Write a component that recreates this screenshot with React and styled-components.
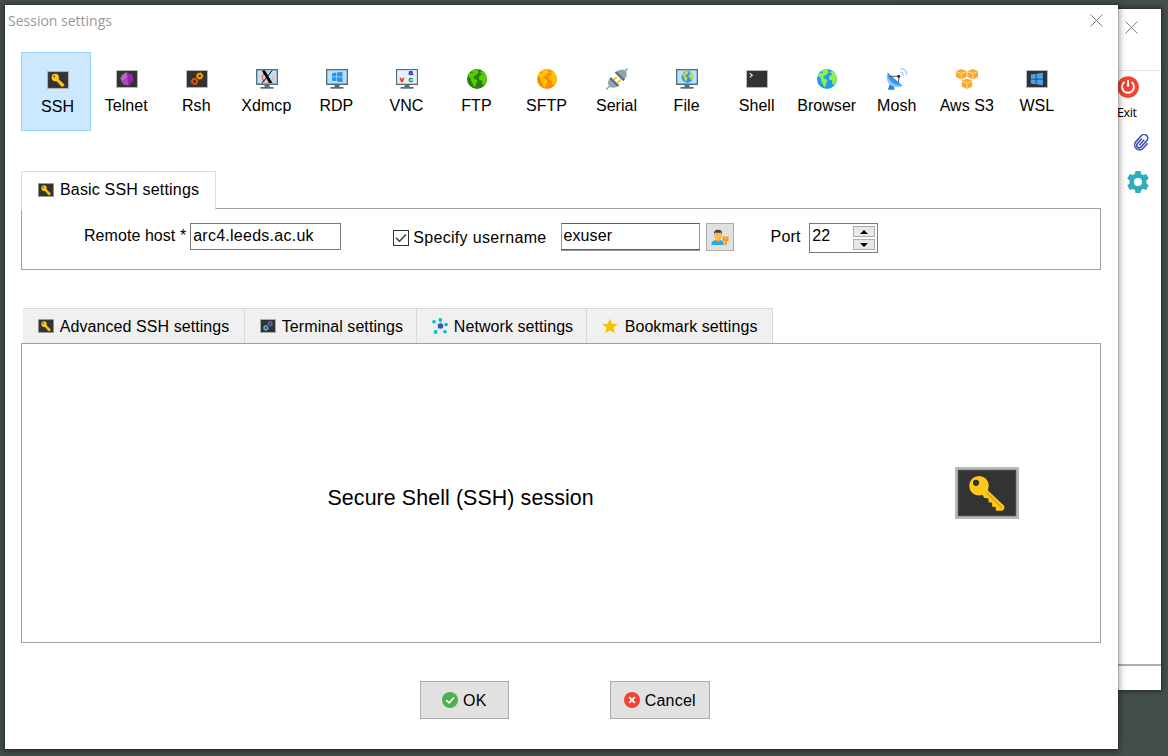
import React from 'react';
import styled, { createGlobalStyle, css } from 'styled-components';

const GlobalStyle = createGlobalStyle`
  * { box-sizing: border-box; }
  body {
    margin: 0;
    overflow: hidden;
    font-family: 'Liberation Sans', Arial, sans-serif;
    font-size: 16px;
    line-height: 18px;
    letter-spacing: 0.13px;
    color: #000;
  }
  svg { display: block; flex: none; }
`;

const Desktop = styled.main`
  position: relative;
  width: 1168px;
  height: 756px;
  overflow: hidden;
  background: #444e4a;
`;

/* ---------- main application window behind the dialog ---------- */

const BackWindow = styled.section`
  position: absolute;
  left: 900px;
  top: 9px;
  width: 261px;
  height: 681px;
  background: #fff;
  box-shadow: 0 0 5px 1px rgba(0, 0, 0, 0.5);
  display: flex;
  flex-direction: column;
  align-items: flex-end;
`;

const BackTitle = styled.header`
  width: 100%;
  height: 62px;
  padding: 12px 23px 0 0;
  border-bottom: 1px solid #e3e3e3;
  display: flex;
  justify-content: flex-end;
`;

const SideTools = styled.div`
  width: 44px;
  flex: 1;
  padding-top: 5px;
  display: flex;
  flex-direction: column;
`;

const ExitLabel = styled.span`
  margin-top: 6px;
  font: 12.5px/18px 'Open Sans', sans-serif;
  letter-spacing: -0.4px;
`;

const SideIcon = styled.div`
  margin: ${(p) => p.$margin};
`;

const StatusBar = styled.footer`
  width: 100%;
  height: 26px;
  border-top: 2px solid #a5b1bd;
`;

/* ---------- dialog ---------- */

const Dialog = styled.section`
  position: absolute;
  left: 5px;
  top: 5px;
  width: 1113px;
  height: 744px;
  background: #fff;
  box-shadow: 0 0 1px rgba(0, 0, 0, 0.6), 0 1px 7px 1px rgba(0, 0, 0, 0.42);
  display: flex;
  flex-direction: column;
  padding: 0 17px 0 16px;
`;

const TitleBar = styled.header`
  height: 47px;
  margin: 0 -2px 0 -13px;
  padding: 7px 0 0;
  display: flex;
  justify-content: space-between;
  align-items: flex-start;

  > svg { margin: 2px 0 0; }
`;

const Title = styled.h1`
  margin: 0;
  font: 400 14px/18px 'Open Sans', sans-serif;
  letter-spacing: 0;
  color: #999;
`;

const Toolbar = styled.nav`
  display: flex;
  height: 79px;
`;

const IconSlot = styled.span`
  height: 22px;
  margin-left: 1px;
  display: flex;
  align-items: center;
`;

const SessionType = styled.button`
  width: 70px;
  margin-right: 0.05px;
  flex: none;
  display: flex;
  flex-direction: column;
  align-items: center;
  gap: 7px;
  border: 1px solid transparent;
  background: none;
  padding: 15px 0 0 0.4px;
  font: inherit;
  letter-spacing: 0.06px;
  white-space: nowrap;
  color: inherit;
  ${(p) => p.$active && css`
    background: #cce8ff;
    border-color: #99d1ff;
    padding: 16px 0 0 3px;
    ${IconSlot} { margin-left: 0; }
  `}
`;

const ActiveTab = styled.div`
  position: relative;
  z-index: 1;
  width: 195px;
  height: 39px;
  margin: 40px 0 -2px;
  padding: 0 0 2px 16px;
  border: 1px solid #dcdcdc;
  border-bottom: 0;
  background: #fff;
  display: flex;
  align-items: center;
  gap: 6px;
  letter-spacing: 0.17px;
`;

const Panel = styled.div`
  height: ${(p) => p.$height}px;
  border: 1px solid #a0a0a0;
  display: flex;
`;

const BasicForm = styled(Panel)`
  align-items: flex-start;
  padding: 14px 0 0 62px;
`;

const Label = styled.label`
  display: flex;
  align-items: center;
  height: 18px;
  margin: ${(p) => p.$margin};
  letter-spacing: ${(p) => p.$spacing || 0.06}px;
  white-space: nowrap;
`;

const Field = styled.div`
  width: ${(p) => p.$width}px;
  height: 27px;
  padding: 3px 2px;
  border: 1px solid;
  border-color: ${(p) => (p.$focused ? '#0078d7 #5aa5e2' : '#7a7a7a')};
  box-shadow: ${(p) => (p.$focused ? '0 1px 0 #9c9c9c' : 'none')};
  background: #fff;
  letter-spacing: ${(p) => (p.$focused ? 0.1 : 0.26)}px;
`;

const CheckBox = styled.span`
  width: 16px;
  height: 16px;
  margin-right: 4px;
  border: 1px solid #333;
`;

const IconButton = styled.button`
  width: 28px;
  height: 28px;
  margin: 0 37px 0 6px;
  padding: 0 0 0 1px;
  border: 1px solid #adadad;
  background: #e1e1e1;
  display: flex;
  align-items: center;
  justify-content: center;
`;

const Spinner = styled.div`
  width: 69px;
  height: 30px;
  margin-left: 8.6px;
  border: 1px solid #7a7a7a;
  padding: 3px 2px 2px 2px;
  display: flex;
  justify-content: space-between;
`;

const SpinButtons = styled.div`
  margin-top: -1px;
  display: flex;
  flex-direction: column;
  gap: 2px;
`;

const SpinButton = styled.span`
  width: 22px;
  height: 11px;
  border: 1px solid #adadad;
  background: #e8e8e8;
  display: flex;
  align-items: center;
  justify-content: center;
`;

const TabRow = styled.div`
  display: flex;
  margin: 38px 0 0 2px;
  height: 35px;
`;

const Tab = styled.div`
  width: ${(p) => p.$width}px;
  padding: 1px 0 0 ${(p) => p.$pad}px;
  border: solid #d9d9d9;
  border-width: 1px 1px 0 0;
  background: #f0f0f0;
  display: flex;
  align-items: center;
  gap: ${(p) => p.$gap || 5.8}px;
  letter-spacing: 0.07px;
  white-space: nowrap;

  > svg { margin-top: -1px; }
`;

const SessionPanel = styled(Panel)`
  align-items: center;
  padding: 0 81px 0 305.5px;
  justify-content: space-between;
`;

const SessionName = styled.h2`
  margin: 9px 0 0;
  font-weight: 400;
  font-size: 21.4px;
  line-height: 26px;
  letter-spacing: 0.09px;
`;

const Actions = styled.footer`
  display: flex;
  gap: 101px;
  padding: 38px 0 0 399px;
`;

const ActionButton = styled.button`
  width: ${(p) => p.$width}px;
  height: 38px;
  padding: 1px 0 0;
  border: 1px solid #adadad;
  background: #e1e1e1;
  display: flex;
  align-items: center;
  justify-content: center;
  gap: 4.5px;
  font: inherit;
  letter-spacing: 0.2px;
  color: inherit;

  > svg { margin-top: -1px; }
`;

/* ---------- icons ---------- */

const Close = () => (
  <svg width="13" height="13" viewBox="0 0 13 13" stroke="#7c7c7c" strokeWidth="1">
    <path d="M.5 .5L12.5 12.5M12.5 .5L.5 12.5" />
  </svg>
);

const KeyTile = ({ width = 22, height = 18 }) => {
  const small = width < 30;
  return (
    <svg width={width} height={height} viewBox="0 0 64 52" preserveAspectRatio="none">
      <rect width="64" height="52" fill="#b9b9b9" />
      <rect x="2.4" y="2.4" width="59.2" height="47.2" fill="#8b8b8b" />
      <rect x="3.2" y="3.2" width="57.6" height="45.6" fill="#333" />
      <path
        fill="#ffc61c"
        stroke={small ? '#ffc61c' : 'none'}
        strokeWidth="2.5"
        d="M31.7 22.3L49.3 39V41.7L47.3 43.7H41L40.7 40L37.3 39.7L37 35.7L33.7 35.3L33.3 31.3L29.3 31L27 27Z"
      />
      {!small && <path stroke="#dba40a" strokeWidth="1.6" d="M31.5 25.5L47 41" />}
      <circle cx="24" cy="18.7" r={small ? 10.6 : 9.8} fill="#ffc61c" />
      <circle cx="21" cy="15.8" r={small ? 2.6 : 3.1} fill="#333" />
    </svg>
  );
};

const Tile = ({ children, width = 22 }) => (
  <svg width={width} height={width === 22 ? 22 : 14} viewBox={width === 22 ? '0 0 22 22' : '0 2 22 18'} preserveAspectRatio="none">
    <rect x=".5" y="2.5" width="21" height="17" fill="#333" stroke="#b9b9b9" />
    {children}
  </svg>
);

const Gear = ({ cx, cy, r, color }) => (
  <g fill="none" stroke={color} transform={`translate(${cx} ${cy})`}>
    <circle r={r} strokeWidth="1.7" />
    <circle r={r + 1} strokeWidth="1.2" strokeDasharray={`${((r + 1) * Math.PI) / 8} ${((r + 1) * Math.PI) / 8}`} />
  </g>
);

const Monitor = ({ children }) => (
  <svg width="22" height="22" viewBox="0 0 22 22">
    <path fill="#546e7a" d="M0 1h22v16H0zM8.5 17h5v2.5h-5z" />
    <path fill="#546e7a" d="M4.5 19h13v1.7h-13z" />
    <path fill="#bbdefb" d="M1.3 2.3h19.4v13.2H1.3z" />
    {children}
  </svg>
);

const windowsPath = 'M0 1.2L4.3 .6V4.6H0ZM5 .5L10.5 -.3V4.6H5ZM0 5.3H4.3V9.3L0 8.7ZM5 5.3H10.5V10.2L5 9.4Z';

const Globe = ({ sea, land }) => (
  <g>
    <circle cx="11" cy="11" r="10" fill={sea} />
    <path fill={land} d="M7.6 1.7L10.5 1.3L12.6 2L11.6 3.3L13 4.7L11.2 5.6L10.4 7.2L8.8 7L8.3 8.7L6.8 9.2L8.3 10.4L10.2 11.2L11.5 13L10.3 15.2L9.3 18.2L8 19.6L7 16.2L5.2 13.3L4.8 10.8L3.2 8.8L1.9 7.6L3 5.3L5.2 5.1L7.4 4.7L5.6 3.6Z" />
    <path fill={land} d="M14.7 3.2L17.4 3.5L19.6 6.2L20.8 9.8L20.5 13.2L18.6 16.4L17 17.1L16.1 14.8L16.3 12.5L13.6 12L12.7 9.5L14.2 7.3L16.2 7L15.8 5.4L14 5.1Z" />
  </g>
);

const GlobeIcon = (p) => (
  <svg width="22" height="22" viewBox="0 0 22 22"><Globe {...p} /></svg>
);

const TelnetIcon = () => (
  <Tile>
    <path fill="#9c27b0" d="M10.5 4.2L16.4 7L17.5 12.2L12.5 17.5L7 16.3L4.4 10.8L6 7Z" />
    <path fill="#ba68c8" d="M10.5 4.2L11.5 9L6.2 13.6L4.4 10.8L6 7Z" />
    <path fill="#ab47bc" d="M11.5 9L12.5 17.5L7 16.3L6.2 13.6Z" />
    <path fill="#8e24aa" d="M11.5 9L17.5 12.2L12.5 17.5Z" />
  </Tile>
);

const RshIcon = () => (
  <Tile>
    <Gear cx={8.5} cy={13.5} r={2.3} color="#e65100" />
    <Gear cx={13.7} cy={8} r={2.1} color="#ff9800" />
  </Tile>
);

const XdmcpIcon = () => (
  <Monitor>
    <circle cx="11.5" cy="9.3" r="5.5" fill="none" stroke="#ffab91" strokeWidth="1" />
    <path d="M9 4.6A5.5 5.5 0 0 0 8.5 13.7" fill="none" stroke="#ff6e40" strokeWidth="1.5" />
    <path d="M5.8 2.4H9L16.5 15H13Z" fill="#000" />
    <path d="M16.2 2.4L6 15.2" stroke="#000" strokeWidth="1" />
  </Monitor>
);

const RdpIcon = () => (
  <Monitor><path fill="#2196f3" transform="translate(6 4)" d={windowsPath} /></Monitor>
);

const VncIcon = () => (
  <Monitor>
    <rect x="1.3" y="2.3" width="19.4" height="13.2" fill="#e3f2fd" />
    <g fontFamily="Liberation Sans, sans-serif" fontWeight="700" fontSize="8" letterSpacing="0" strokeWidth=".3">
      <text x="3.8" y="13.8" fill="#e8131b" stroke="#e8131b">v</text>
      <text x="12.6" y="7.2" fill="#2222dd" stroke="#2222dd">a</text>
      <text x="12.6" y="14.2" fill="#168a1c" stroke="#168a1c">c</text>
    </g>
  </Monitor>
);

const SerialIcon = () => (
  <svg width="22" height="22" viewBox="0 0 22 22">
    <path stroke="#90a4ae" strokeWidth="1.6" d="M0 21.5L4 18M18 4.5L21.5 .5" />
    <path fill="#90a4ae" d="M4.5 9.5L13 17.7Q7.5 21 4 19Q-.5 16 4.5 9.5Z" />
    <path fill="#90a4ae" d="M9.3 4.5L17.3 12.7Q22.5 7.5 20 3.5Q15.5 -1 9.3 4.5Z" />
    <path stroke="#ffc107" strokeWidth="1.8" d="M7.5 12L11 8.8M11.3 15L15 11.4" />
    <path stroke="#546e7a" strokeWidth="2.2" d="M4.3 10L12.4 18M9.5 4L18 12.3" />
  </svg>
);

const FileIcon = () => (
  <Monitor>
    <g transform="translate(5 2.5) scale(.58)"><Globe sea="#2196f3" land="#d4d93a" /></g>
  </Monitor>
);

const ShellIcon = () => (
  <Tile><path d="M3.8 5.2L6.3 7.3L3.8 9.4" fill="none" stroke="#e0e0e0" strokeWidth="1.2" /></Tile>
);

const MoshIcon = () => (
  <svg width="22" height="22" viewBox="0 0 22 22">
    <path fill="#1e88e5" d="M4 15.5L8 17.5L8.5 21.8H1.8Z" />
    <path fill="#42a5f5" d="M1.7 4.7Q-.5 12.5 4.5 16.5Q10 20 16.4 17.7Z" />
    <path fill="#90caf9" d="M1.7 4.7Q1 11 6 14.8Q11 18.3 16.4 17.7Q9 21 3.7 16.5Q-1.3 11 1.7 4.7Z" />
    <path fill="#1e88e5" d="M1.7 4.7L16.4 17.7Q10 17 6 12.5Q2 8.5 1.7 4.7Z" opacity=".55" />
    <path stroke="#37474f" strokeWidth=".9" fill="none" d="M4 8.4L13 8.2L12.5 14.4" />
    <circle cx="12.8" cy="8.2" r="1.5" fill="#1a237e" />
    <path stroke="#90caf9" strokeWidth="1.2" fill="none" d="M14.2 4Q17 4.5 17.3 8M14.6 .7Q20.8 1.3 21 7.2" />
  </svg>
);

const Cube = ({ x, y }) => (
  <g transform={`translate(${x} ${y})`}>
    <path fill="#fba92c" d="M0 2L5.3 0L10.6 2V8L5.3 10.5L0 8Z" />
    <path stroke="#fff" strokeWidth=".6" fill="none" d="M.3 2.7L5.3 4.5L10.3 2.7M5.3 4.5V10" />
  </g>
);

const AwsIcon = () => (
  <svg width="22" height="22" viewBox="0 0 22 22">
    <Cube x={0} y={1} /><Cube x={11.4} y={1} /><Cube x={5.7} y={10.6} />
  </svg>
);

const WslIcon = () => (
  <Tile><path fill="#42a5f5" transform="translate(4.8 5.2) scale(1.15 1.18)" d={windowsPath} /></Tile>
);

const NetworkIcon = () => (
  <svg width="16" height="16" viewBox="0 0 16 16">
    <path stroke="#9fd8ea" strokeWidth=".8" d="M8.5 8L2 4M8.5 8V2M8.5 8L14.3 6.5M8.5 8L3.5 14M8.5 8L13 13.7" />
    <g fill="#00bcd4">
      <circle cx="2" cy="3.8" r="1.8" /><circle cx="8.3" cy="1.9" r="1.9" /><circle cx="14.2" cy="6.6" r="1.8" />
      <circle cx="3.6" cy="14" r="1.9" /><circle cx="13" cy="13.8" r="1.8" />
    </g>
    <circle cx="8.5" cy="8" r="2.8" fill="#3f51b5" />
  </svg>
);

const StarIcon = () => (
  <svg width="16" height="16" viewBox="0 0 16 16">
    <path fill="#f5c400" d="M8 .4L10.1 5.8L15.8 6.1L11.4 9.8L12.9 15.4L8 12.3L3.1 15.4L4.6 9.8L.2 6.1L5.9 5.8Z" />
  </svg>
);

const UserKeyIcon = () => (
  <svg width="18" height="17" viewBox="0 0 18 17">
    <path fill="#29a9e8" d="M.5 16V14Q1 11.5 5 11L7 12.3L9 11Q13 11.6 13 16Z" />
    <path fill="#ff9f2e" d="M5 8.5H9V11.5L7 13.2L5 11.5Z" />
    <ellipse cx="7" cy="6.8" rx="3.6" ry="4.3" fill="#ffb74d" />
    <path fill="#424242" d="M3 5.4Q2.3 .8 7.2 .8Q11.8 1 11 5.4L10 3.6Q7 4 4.1 3.5Z" />
    <path fill="#ff9800" d="M11.6 7.5h5.9v4.4h-1.8v4.6h-2v-4.6h-2.1z" />
    <path fill="#e1e1e1" d="M13.5 8.7h2.2v1h-2.2z" />
  </svg>
);

const OkIcon = () => (
  <svg width="16" height="16" viewBox="0 0 16 16">
    <circle cx="8" cy="8" r="8" fill="#4caf50" />
    <path d="M4 8.2L7 10.8L12 5.6" fill="none" stroke="#fff" strokeWidth="1.7" />
  </svg>
);

const CancelIcon = () => (
  <svg width="16" height="16" viewBox="0 0 16 16">
    <circle cx="8" cy="8" r="8" fill="#f44336" />
    <path d="M5.2 5.2L10.8 10.8M10.8 5.2L5.2 10.8" stroke="#fff" strokeWidth="1.9" />
  </svg>
);

const PowerIcon = () => (
  <svg width="22" height="22" viewBox="0 0 22 22">
    <circle cx="11" cy="11" r="10.8" fill="#f44336" />
    <path d="M7.4 6A6 6 0 1 0 14.6 6M11 4V10.8" fill="none" stroke="#fff" strokeWidth="1.9" />
  </svg>
);

const ClipIcon = () => (
  <svg width="17" height="17" viewBox="0 0 17 17">
    <g transform="rotate(42 8.5 8.5)" fill="none" stroke="#3f51b5" strokeWidth="1.6">
      <path d="M11.2 5V12A2.5 2.5 0 0 1 6.2 12V5.6" />
      <path d="M8.7 12V4.6M13.6 5V11.6A4.9 4.9 0 0 1 3.8 11.6V3.6A3.7 3.7 0 0 1 11.2 3.6V6" />
    </g>
  </svg>
);

const SettingsIcon = () => (
  <svg width="22" height="22" viewBox="0 0 22 22">
    <path fill="#2fadbd" fillRule="evenodd" d="M8.5 0H13.5L14.2 3L16.2 4.1L19.2 3.1L21.7 7.5L19.4 9.7V12.3L21.7 14.5L19.2 18.9L16.2 17.9L14.2 19L13.5 22H8.5L7.8 19L5.8 17.9L2.8 18.9L.3 14.5L2.6 12.3V9.7L.3 7.5L2.8 3.1L5.8 4.1L7.8 3ZM11 7A4 4 0 1 0 11 15A4 4 0 1 0 11 7Z" />
  </svg>
);

const sessionTypes = [
  ['SSH', <KeyTile />],
  ['Telnet', <TelnetIcon />],
  ['Rsh', <RshIcon />],
  ['Xdmcp', <XdmcpIcon />],
  ['RDP', <RdpIcon />],
  ['VNC', <VncIcon />],
  ['FTP', <GlobeIcon sea="#2e7d0c" land="#55cc08" />],
  ['SFTP', <GlobeIcon sea="#ff8c00" land="#ffc400" />],
  ['Serial', <SerialIcon />],
  ['File', <FileIcon />],
  ['Shell', <ShellIcon />],
  ['Browser', <GlobeIcon sea="#2196f3" land="#8bf04a" />],
  ['Mosh', <MoshIcon />],
  ['Aws S3', <AwsIcon />],
  ['WSL', <WslIcon />],
];

export default function App() {
  return (
    <Desktop>
      <GlobalStyle />
      <BackWindow>
        <BackTitle><Close /></BackTitle>
        <SideTools>
          <PowerIcon />
          <ExitLabel>Exit</ExitLabel>
          <SideIcon $margin="12px 0 0 16px"><ClipIcon /></SideIcon>
          <SideIcon $margin="20px 0 0 10px"><SettingsIcon /></SideIcon>
        </SideTools>
        <StatusBar />
      </BackWindow>

      <Dialog>
        <TitleBar>
          <Title>Session settings</Title>
          <Close />
        </TitleBar>

        <Toolbar>
          {sessionTypes.map(([name, icon], i) => (
            <SessionType key={name} $active={i === 0}>
              <IconSlot>{icon}</IconSlot>
              {name}
            </SessionType>
          ))}
        </Toolbar>

        <ActiveTab>
          <KeyTile width={16} height={14} />
          Basic SSH settings
        </ActiveTab>
        <BasicForm $height={62}>
          <Label $margin="4px 4px 0 0">Remote host *</Label>
          <Field $width={151}>arc4.leeds.ac.uk</Field>
          <Label $margin="6px 14px 0 52px" $spacing={0.33}>
            <CheckBox>
              <svg width="14" height="14" viewBox="0 0 14 14">
                <path d="M2 6.8L5.5 10.3L12 3.5" fill="none" stroke="#333" strokeWidth="1.3" />
              </svg>
            </CheckBox>
            Specify username
          </Label>
          <Field $width={139} $focused>exuser</Field>
          <IconButton><UserKeyIcon /></IconButton>
          <Label $margin="5px 0 0" $spacing={0.2}>Port</Label>
          <Spinner>
            22
            <SpinButtons>
              <SpinButton><svg width="8" height="4"><path d="M0 4L4 0L8 4Z" /></svg></SpinButton>
              <SpinButton><svg width="8" height="4"><path d="M0 0L4 4L8 0Z" /></svg></SpinButton>
            </SpinButtons>
          </Spinner>
        </BasicForm>

        <TabRow>
          <Tab $width={222} $pad={15}><KeyTile width={16} height={14} />Advanced SSH settings</Tab>
          <Tab $width={172} $pad={15}>
            <Tile width={16}>
              <Gear cx={8} cy={13.5} r={2.3} color="#64b5f6" />
              <Gear cx={14} cy={8} r={2.1} color="#5c6bc0" />
            </Tile>
            Terminal settings
          </Tab>
          <Tab $width={170} $pad={15}><NetworkIcon />Network settings</Tab>
          <Tab $width={185.5} $pad={15.4} $gap={6.3}><StarIcon />Bookmark settings</Tab>
        </TabRow>
        <SessionPanel $height={300}>
          <SessionName>Secure Shell (SSH) session</SessionName>
          <KeyTile width={64} height={52} />
        </SessionPanel>

        <Actions>
          <ActionButton $width={89}><OkIcon />OK</ActionButton>
          <ActionButton $width={100}><CancelIcon />Cancel</ActionButton>
        </Actions>
      </Dialog>
    </Desktop>
  );
}
